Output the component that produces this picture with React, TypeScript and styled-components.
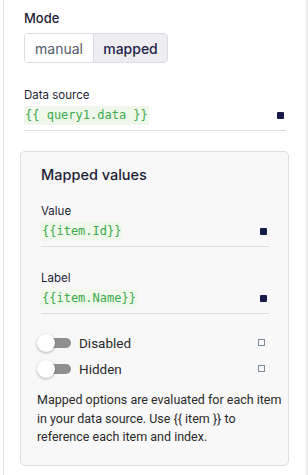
import { FC } from "react";
import styled, { createGlobalStyle } from "styled-components";

const GlobalStyle = createGlobalStyle`
  html, body {
    margin: 0;
    padding: 0;
    background: #ffffff;
  }
  body {
    font-family: Inter, "Noto Sans", sans-serif;
    color: #1d1d35;
  }
`;

type FieldProps = {
  label: string;
  code: string;
};

const Field: FC<FieldProps> = ({ label, code }) => (
  <FieldBox>
    <FieldLabel>{label}</FieldLabel>
    <FieldRow>
      <Code>{code}</Code>
      <FilledDot />
    </FieldRow>
  </FieldBox>
);

const ToggleRow: FC<{ label: string }> = ({ label }) => (
  <Toggle>
    <Switch>
      <Knob />
    </Switch>
    <ToggleLabel>{label}</ToggleLabel>
    <HollowDot />
  </Toggle>
);

const App: FC = () => {
  return (
    <>
      <GlobalStyle />
      <Page>
        <Panel>
          <Title>Mode</Title>
          <Segmented>
            <Segment $w={68}>manual</Segment>
            <Segment $w={73} $active>
              mapped
            </Segment>
          </Segmented>

          <SourceField>
            <FieldLabel>Data source</FieldLabel>
            <FieldRow>
              <Code>{"{{ query1.data }}"}</Code>
              <FilledDot />
            </FieldRow>
          </SourceField>

          <Card>
            <CardTitle>Mapped values</CardTitle>
            <Field label="Value" code="{{item.Id}}" />
            <Field label="Label" code="{{item.Name}}" />
            <Toggles>
              <ToggleRow label="Disabled" />
              <ToggleRow label="Hidden" />
            </Toggles>
            <Hint>
              {"Mapped options are evaluated for each item in your data source. Use {{ item }} to reference each item and index."}
            </Hint>
          </Card>
        </Panel>
        <Scroll />
      </Page>
    </>
  );
};

export default App;

const Page = styled.div`
  display: flex;
  width: 308px;
  height: 475px;
  padding-left: 3px;
  box-sizing: border-box;
  overflow: hidden;
`;

const Panel = styled.div`
  flex: 1;
  border-left: 1px solid #e2e2e2;
  padding: 10px 0 0 20px;
  box-sizing: border-box;
`;

const Scroll = styled.div`
  width: 2px;
  background: #ececec;
`;

const Title = styled.div`
  font-size: 13px;
  font-weight: 500;
  line-height: 16px;
  color: #1d1d35;
`;

const Segmented = styled.div`
  display: inline-flex;
  margin-top: 7px;
  height: 30px;
  border: 1px solid #dcdce2;
  border-radius: 4px;
  overflow: hidden;
  box-sizing: border-box;
`;

const Segment = styled.div<{ $active?: boolean; $w: number }>`
  display: flex;
  align-items: center;
  justify-content: center;
  width: ${(p) => p.$w}px;
  font-size: 14px;
  font-weight: ${(p) => (p.$active ? 500 : 400)};
  color: ${(p) => (p.$active ? "#1e1e48" : "#555c6c")};
  background: ${(p) => (p.$active ? "#ededf2" : "#ffffff")};
  & + & {
    border-left: 1px solid #dcdce2;
  }
`;

const SourceField = styled.div`
  margin-top: 25px;
  width: 262px;
`;

const FieldBox = styled.div`
  width: 228px;
  & + & {
    margin-top: 24px;
  }
`;

const FieldLabel = styled.div`
  font-size: 11.5px;
  line-height: 14px;
  color: #1d1d35;
`;

const FieldRow = styled.div`
  display: flex;
  align-items: center;
  justify-content: space-between;
  margin-top: 4px;
  padding-bottom: 5px;
  padding-right: 2px;
  border-bottom: 1px solid #dedede;
`;

const Code = styled.span`
  font-family: "DejaVu Sans Mono", "Liberation Mono", monospace;
  font-size: 12px;
  line-height: 19px;
  color: #3aaa4c;
  background: #eff8ea;
  padding: 0 1px;
`;

const FilledDot = styled.span`
  width: 7px;
  height: 7px;
  border-radius: 1px;
  background: #161a4a;
`;

const HollowDot = styled.span`
  width: 7px;
  height: 7px;
  border: 1.5px solid #7f8c99;
  box-sizing: border-box;
  margin-right: 2px;
`;

const Card = styled.div`
  margin: 20px 0 0 -4px;
  width: 269px;
  box-sizing: border-box;
  background: #f8f8f8;
  border: 1px solid #dedede;
  border-radius: 5px;
  padding: 14px 0 18px 20px;
`;

const CardTitle = styled.div`
  font-size: 14.5px;
  font-weight: 500;
  line-height: 18px;
  color: #1d1d35;
  margin-bottom: 20px;
`;

const Toggles = styled.div`
  margin-top: 19px;
  display: flex;
  flex-direction: column;
  gap: 7px;
  width: 230px;
  margin-left: -4px;
`;

const Toggle = styled.div`
  display: flex;
  align-items: center;
  height: 19px;
`;

const Switch = styled.span`
  position: relative;
  width: 30px;
  height: 10px;
  margin-left: 4px;
  border-radius: 5px;
  background: #8f8f8f;
`;

const Knob = styled.span`
  position: absolute;
  left: -4px;
  top: -4px;
  width: 18px;
  height: 18px;
  border-radius: 50%;
  background: #ffffff;
  box-shadow: 0 1px 3px rgba(0, 0, 0, 0.3);
`;

const ToggleLabel = styled.span`
  flex: 1;
  margin-left: 8px;
  font-family: Roboto, "Liberation Sans", sans-serif;
  font-size: 13.5px;
  font-weight: 400;
  color: #2a2a2a;
`;

const Hint = styled.p`
  margin: 13px 0 0 -4px;
  width: 246px;
  font-family: Roboto, "Liberation Sans", sans-serif;
  font-size: 12.5px;
  line-height: 18.5px;
  color: #2a2a2a;
`;
